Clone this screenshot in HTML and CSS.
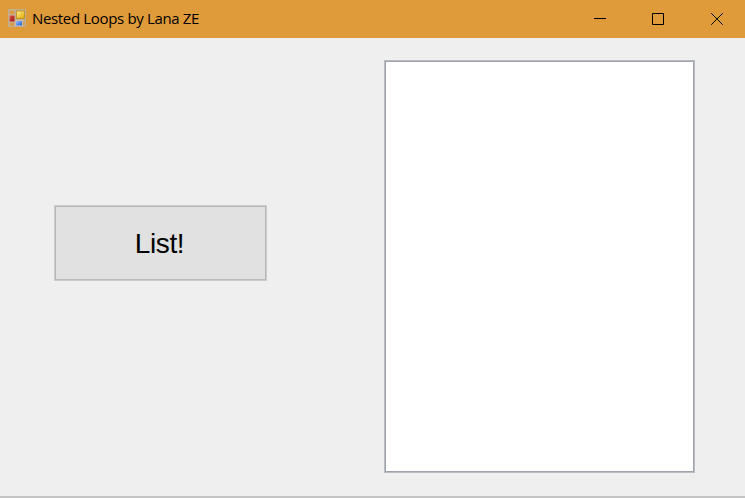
FILE: index.html
```html
<!DOCTYPE html>
<html lang="en">
<head>
<meta charset="utf-8">
<title>Nested Loops by Lana ZE</title>
<link rel="stylesheet" href="styles.css">
</head>
<body>
<div class="window">
  <header class="titlebar">
    <svg class="app-icon" width="18" height="18" viewBox="0 0 18 18">
      <defs>
        <linearGradient id="yellow" x2="1" y2="1"><stop stop-color="#fff08a"/><stop offset="1" stop-color="#dfa400"/></linearGradient>
        <linearGradient id="red" x2="1" y2="1"><stop stop-color="#dc5848"/><stop offset="1" stop-color="#9c1010"/></linearGradient>
        <linearGradient id="blue" x2="1" y2="1"><stop stop-color="#8dbcff"/><stop offset="1" stop-color="#2560d0"/></linearGradient>
      </defs>
      <rect width="18" height="18" rx="1" fill="#c3ad8c"/>
      <path d="M2 2h4v3H2zM2 14h4v2.500H2zM15 13h1.500v3H15z" fill="#df9a3a"/>
      <rect x="1" y="6" width="6" height="7" fill="#d8b8a4"/>
      <rect x="1.500" y="6.500" width="5" height="6" fill="url(#red)"/>
      <rect x="8.500" y="2" width="8" height="7.500" fill="url(#yellow)" stroke="#b88c1c" stroke-width=".8"/>
      <rect x="7.500" y="11.500" width="7" height="5.500" fill="#cfd0d2"/>
      <rect x="8" y="12" width="6" height="4.500" fill="url(#blue)"/>
    </svg>
    <h1 class="title">Nested Loops by Lana ZE</h1>
    <div class="controls">
      <svg class="control" width="12" height="12" viewBox="0 0 12 12"><path d="M0 5.500h12"/></svg>
      <svg class="control" width="12" height="12" viewBox="0 0 12 12"><path d="M.5.5h11v11H.5z"/></svg>
      <svg class="control control-close" width="12" height="12" viewBox="0 0 12 12"><path d="M.2.2l11.600 11.600M11.800.2L.2 11.800"/></svg>
    </div>
  </header>
  <main class="form">
    <button class="list-button">List!</button>
    <div class="list-box"></div>
  </main>
  <div class="window-edge"></div>
</div>
</body>
</html>
```
FILE: styles.css
```css
* { box-sizing: border-box; }
body { margin: 0; overflow: hidden; }
.window {
  width: 745px;
  height: 498px;
  display: flex;
  flex-direction: column;
  background: #efefef;
}
.titlebar {
  height: 38px;
  flex: none;
  display: flex;
  align-items: center;
  padding: 0 22px 0 8px;
  background: #df9a3a;
}
.app-icon { display: block; margin-top: -2px; }
.title {
  margin: -2px 0 0 6px;
  font: 400 15px/20px "Segoe UI", "Open Sans", "Noto Sans", sans-serif;
  letter-spacing: -0.34px;
  color: #000;
  white-space: nowrap;
}
.controls { display: flex; gap: 46px; margin-left: auto; }
.control { display: block; fill: none; stroke: #000; stroke-width: 1; }
.control-close { margin-left: 1px; }
.form {
  flex: 1;
  display: flex;
  justify-content: space-between;
  align-items: flex-start;
  padding: 22px 50px 0 54px;
}
.list-button {
  width: 213px;
  height: 76px;
  margin-top: 145px;
  padding: 1px 2px 0 0;
  border: 1px solid #cbcbcb;
  box-shadow: inset 0 0 0 1px #b9b9b9;
  background: #e1e1e1;
  color: #000;
  font: 28px/32px "Liberation Sans", Arial, sans-serif;
  letter-spacing: -0.4px;
}
.list-box {
  width: 311px;
  height: 413px;
  border: 1px solid #b9bcc2;
  box-shadow: inset 0 0 0 1px #a0a3ab;
  background: #fff;
}
.window-edge { height: 2px; flex: none; background: #c4c4c4; }
```
